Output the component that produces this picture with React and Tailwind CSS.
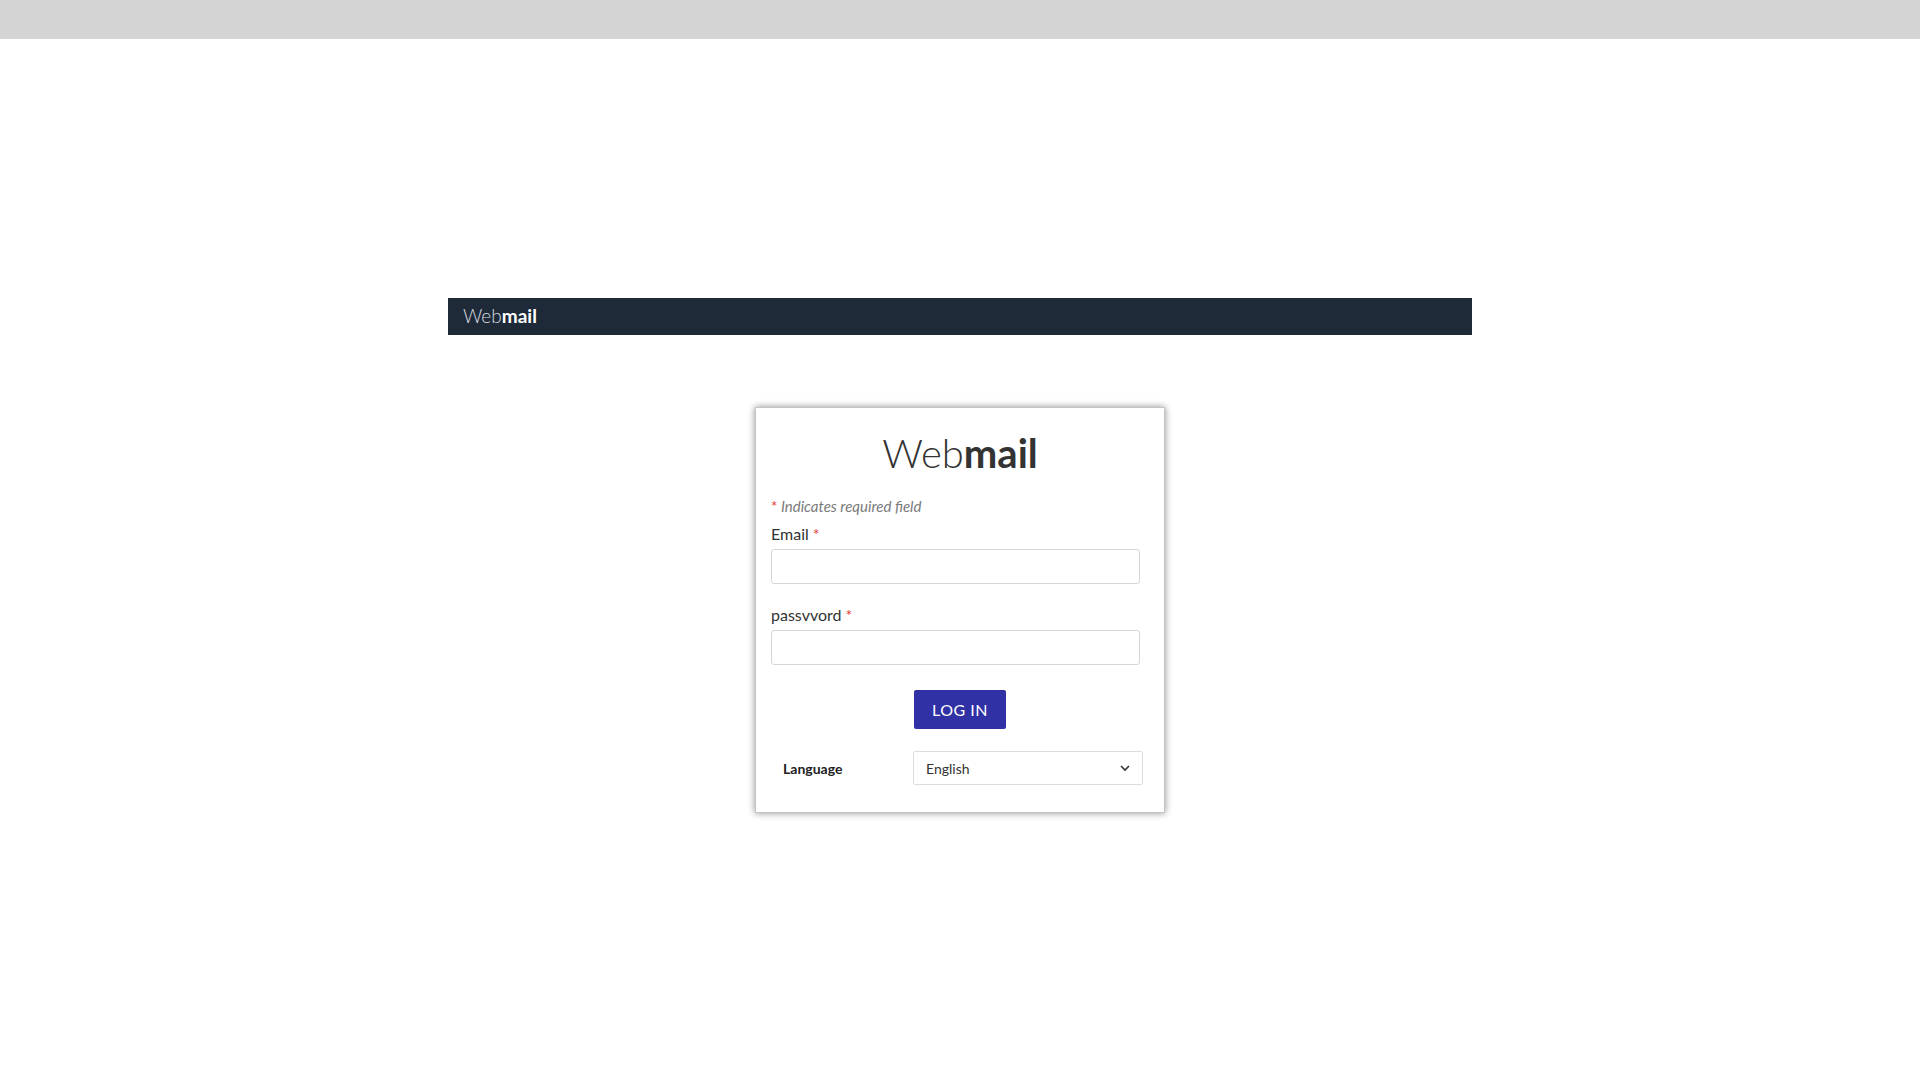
import { useState } from 'react';

const Required = () => <span className="text-[#e53935] ml-1">*</span>;

const Field = ({ label, type, value, onChange }) => (
  <div className="ml-[15px] w-[369px]">
    <label className="block text-[16px] leading-[19px] text-[#333]">
      {label}
      <Required />
    </label>
    <input
      type={type}
      value={value}
      onChange={(e) => onChange(e.target.value)}
      className="mt-[6px] block w-full h-[35px] px-2 border border-[#d6d6d6] rounded-[3px] bg-white text-[15px] outline-none"
    />
  </div>
);

export default function App() {
  const [email, setEmail] = useState('');
  const [password, setPassword] = useState('');
  const [lang, setLang] = useState('English');

  return (
    <div className="min-h-screen bg-white" style={{ fontFamily: 'Lato, "Open Sans", sans-serif' }}>
      <div className="h-[39px] bg-[#d4d4d4]" />

      <div className="w-[1024px] mx-auto mt-[259px]">
        <header className="h-[37px] bg-[#1e2a38] flex items-center pl-[15px]">
          <span className="text-[19px] text-white">
            <span className="font-light text-[#d8dbe0]">Web</span>
            <span className="font-bold">mail</span>
          </span>
        </header>
      </div>

      <div className="w-[410px] mx-auto mt-[72px] bg-white border border-[#c4c4c4] shadow-[0_0_7px_rgba(0,0,0,0.45)] pt-[21px] pb-[27px]">
        <h1 className="text-center text-[40px] leading-[48px] text-[#333]">
          <span className="font-light">Web</span>
          <span className="font-bold">mail</span>
        </h1>

        <p className="ml-[15px] mt-[20px] text-[15px] leading-[18px] italic text-[#7a7a7a]">
          <span className="text-[#e53935] not-italic">*</span> Indicates required field
        </p>

        <div className="mt-[9px]">
          <Field label="Email" type="email" value={email} onChange={setEmail} />
        </div>
        <div className="mt-[21px]">
          <Field label="passvvord" type="password" value={password} onChange={setPassword} />
        </div>

        <div className="flex justify-center mt-[25px]">
          <button className="h-[39px] w-[92px] bg-[#2f31a5] rounded-[2px] text-white text-[16px] tracking-[0.5px]">
            LOG IN
          </button>
        </div>

        <div className="flex items-center mt-[22px] ml-[15px]">
          <span className="w-[142px] pl-[12px] text-[14px] font-bold text-[#222]">Language</span>
          <div className="relative w-[230px] h-[34px]">
            <select
              value={lang}
              onChange={(e) => setLang(e.target.value)}
              className="appearance-none w-full h-full border border-[#dcdcdc] rounded-[2px] bg-white pl-[12px] text-[14px] text-[#333] outline-none"
            >
              <option>English</option>
              <option>Norsk</option>
              <option>Deutsch</option>
            </select>
            <svg
              className="absolute right-[12px] top-1/2 -translate-y-1/2 w-[12px] h-[12px] pointer-events-none"
              viewBox="0 0 12 12"
              fill="none"
              stroke="#333"
              strokeWidth="1.6"
            >
              <path d="M2 4l4 4 4-4" />
            </svg>
          </div>
        </div>
      </div>
    </div>
  );
}
